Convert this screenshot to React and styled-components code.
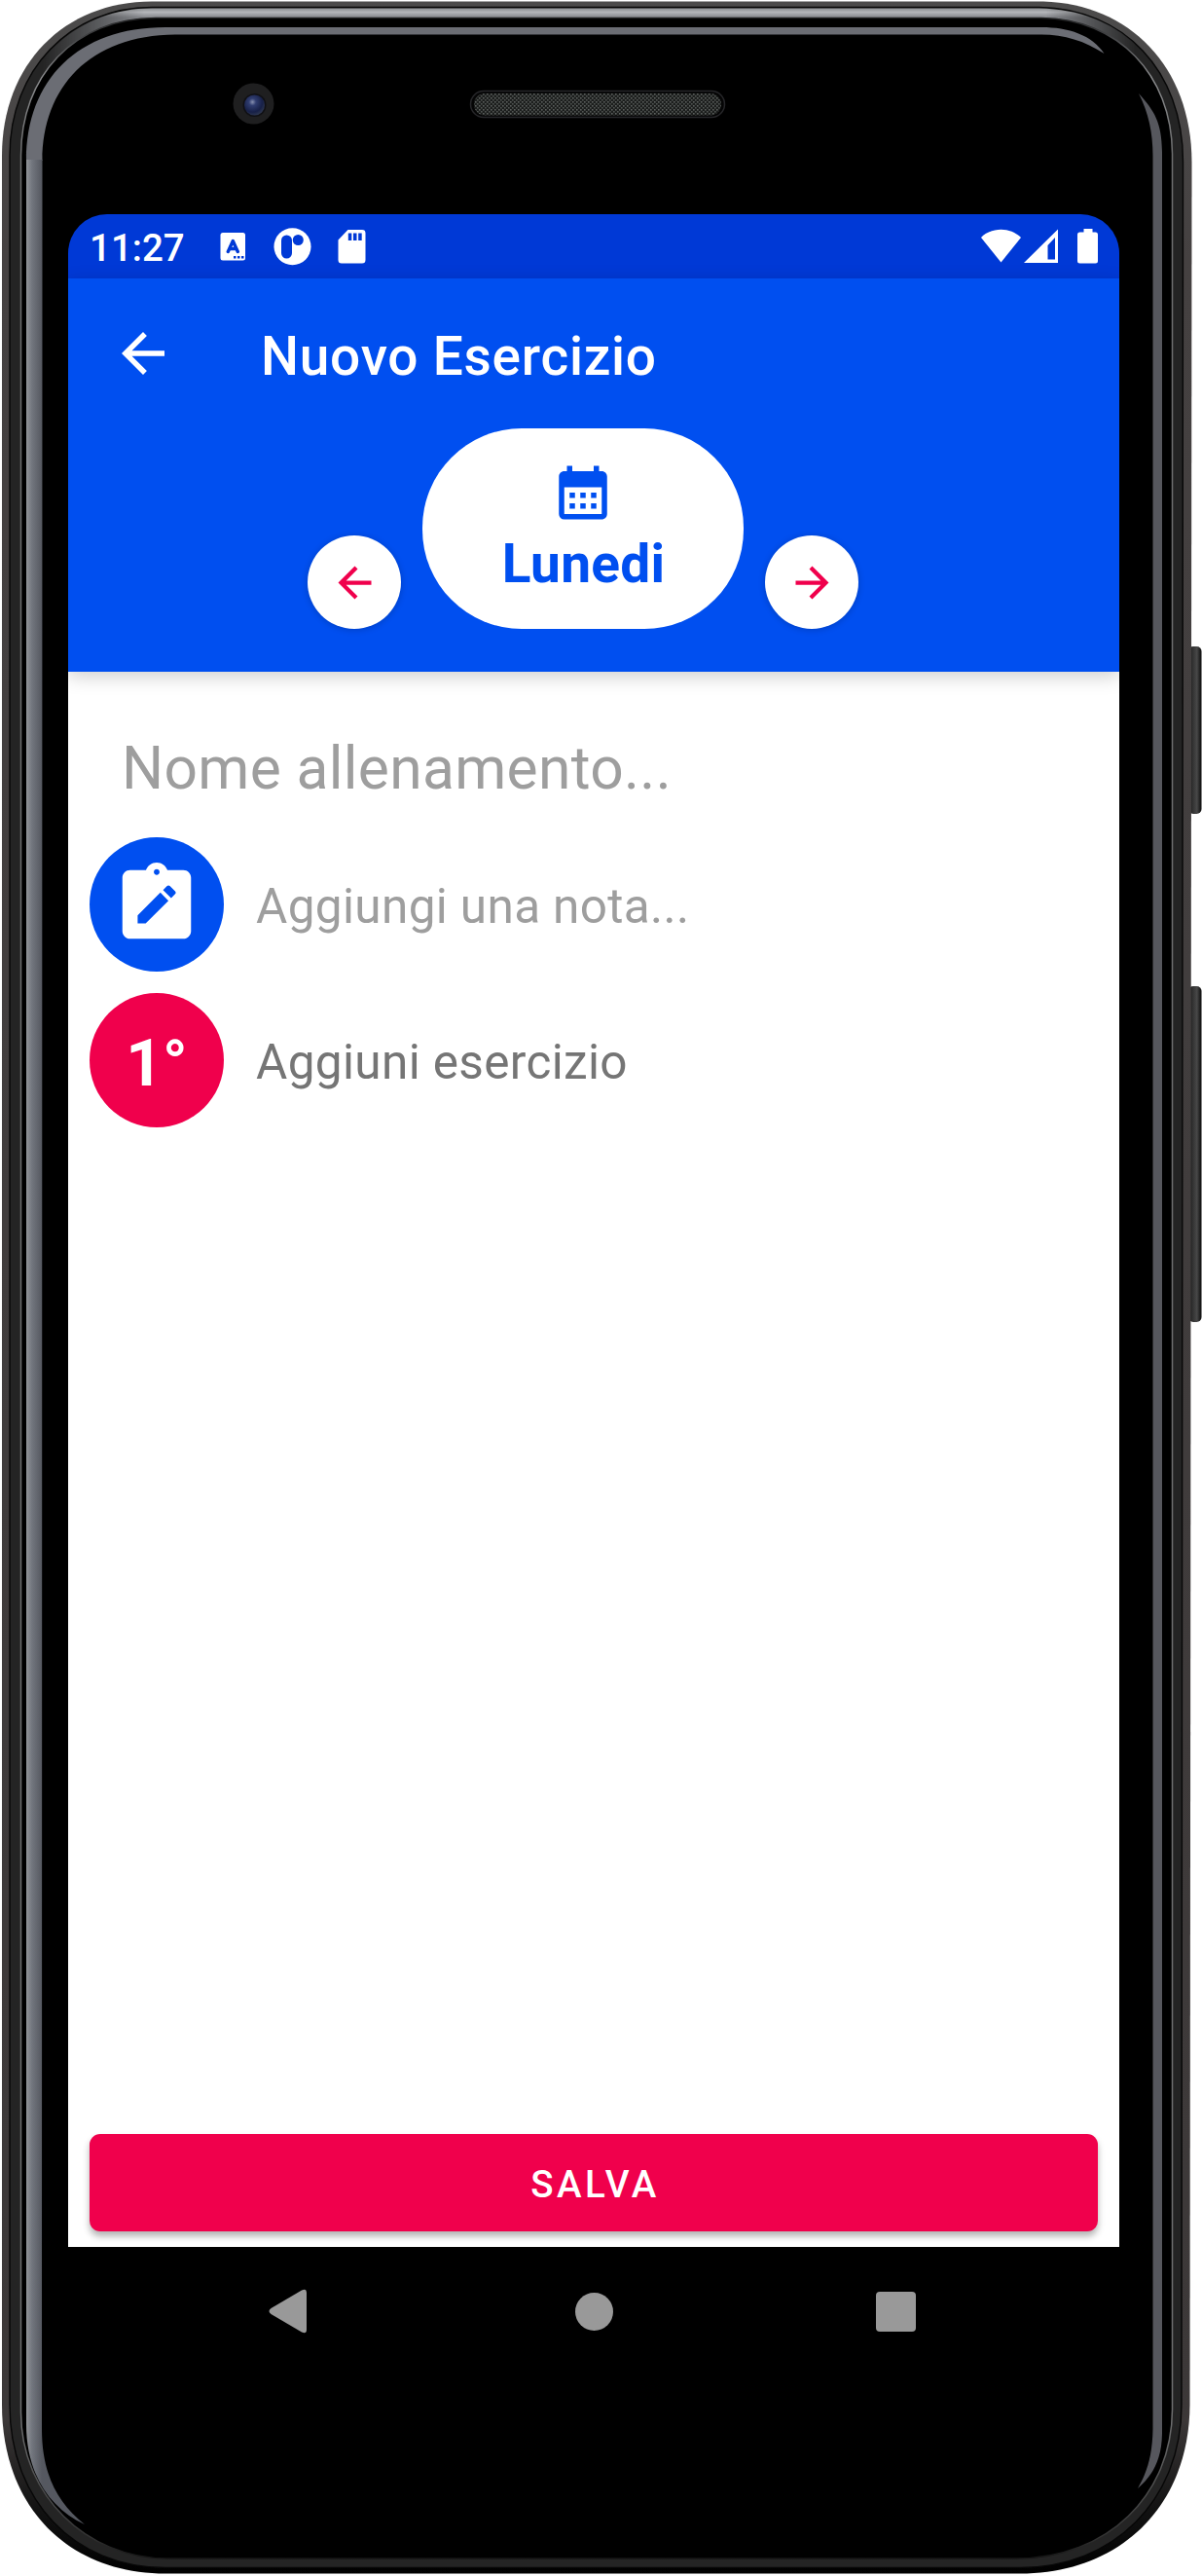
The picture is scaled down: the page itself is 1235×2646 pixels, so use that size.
import React from "react";
import styled, { createGlobalStyle, css } from "styled-components";

const BLUE = "#004ff0";
const BLUE_DARK = "#0039d6";
const PINK = "#f0004c";

const GlobalStyle = createGlobalStyle`
  html, body { margin: 0; padding: 0; background: #fff; }
  body { font-family: Roboto, "Liberation Sans", sans-serif; overflow: hidden; }
  *, *::before, *::after { box-sizing: border-box; }
`;

const Stage = styled.main`
  position: relative;
  width: 1235px;
  height: 2646px;
  padding: 220px 85px 0 70px;
  overflow: hidden;
`;

const DeviceArt = styled.svg`
  position: absolute;
  inset: 0;
  width: 1235px;
  height: 2646px;
`;

const Screen = styled.div`
  position: relative;
  display: flex;
  flex-direction: column;
  width: 1080px;
  height: 2220px;
  border-radius: 40px 40px 0 0;
  overflow: hidden;
  background: #000;
`;

const StatusBar = styled.div`
  display: flex;
  justify-content: space-between;
  flex: none;
  height: 66px;
  padding: 0 22px;
  background: ${BLUE_DARK};
`;

const StatusGroup = styled.div`
  display: flex;
  align-items: center;
`;

const Clock = styled.span`
  width: 104px;
  padding-top: 4px;
  font-size: 38.5px;
  font-weight: 500;
  line-height: 46px;
  color: #fff;
`;

const Glyph = styled.svg`
  display: block;
  flex: none;
  width: ${(p) => p.$w}px;
  height: ${(p) => p.$h || p.$w}px;
  fill: ${(p) => p.$color || "#fff"};
`;

const Header = styled.header`
  position: relative;
  z-index: 1;
  flex: none;
  height: 404px;
  background: ${BLUE};
  box-shadow: 0 5px 18px rgba(0, 0, 0, 0.19);
`;

const Toolbar = styled.div`
  display: flex;
  align-items: center;
  height: 154px;
  padding-left: 44px;
`;

const IconButton = styled.button`
  display: flex;
  padding: 0;
  border: 0;
  background: none;
`;

const Title = styled.h1`
  margin: 0 0 0 88px;
  padding-top: 6px;
  font-size: 55px;
  font-weight: 500;
  letter-spacing: 0.75px;
  line-height: 66px;
  color: #fff;
  white-space: nowrap;
`;

const DayPicker = styled.div`
  display: flex;
  align-items: flex-end;
  gap: 22px;
  padding-left: 246px;
`;

const DayButton = styled.button`
  display: flex;
  align-items: center;
  justify-content: center;
  width: 96px;
  height: 96px;
  padding: 0;
  border: 0;
  border-radius: 50%;
  background: #fff;
  box-shadow: 0 1px 7px rgba(0, 0, 0, 0.2);
`;

const DayPill = styled.div`
  display: flex;
  flex-direction: column;
  align-items: center;
  width: 330px;
  height: 206px;
  padding-top: 33px;
  border-radius: 102px;
  background: #fff;
`;

const DayName = styled.span`
  margin-top: 8px;
  padding-left: 1px;
  font-size: 55px;
  font-weight: 700;
  letter-spacing: 0.25px;
  line-height: 65px;
  color: ${BLUE};
`;

const Content = styled.section`
  display: flex;
  flex-direction: column;
  flex: none;
  height: 1618px;
  padding: 0 22px 16px;
  background: #fff;
`;

const NameField = styled.div`
  display: flex;
  align-items: center;
  height: 170px;
  padding: 29px 0 0 33px;
  font-size: 60.5px;
  letter-spacing: 0.33px;
  line-height: 72px;
  color: #9e9e9e;
`;

const Row = styled.div`
  display: flex;
  align-items: center;
  gap: 33px;
  height: 138px;
  margin-bottom: 22px;
`;

const Badge = styled.div`
  display: flex;
  align-items: center;
  justify-content: center;
  width: 138px;
  height: 138px;
  border-radius: 50%;
  background: ${(p) => p.$bg};
  ${(p) =>
    p.$text &&
    css`
      padding-top: 7px;
      font-size: 66px;
      font-weight: 700;
      line-height: 78px;
      color: #fff;
    `}
`;

const RowText = styled.span`
  padding-top: 4px;
  font-size: 49.5px;
  letter-spacing: 0.35px;
  line-height: 58px;
  color: ${(p) => p.$color};
`;

const SaveButton = styled.button`
  display: flex;
  align-items: center;
  justify-content: center;
  height: 100px;
  margin-top: auto;
  padding: 4px 0 0 3px;
  border: 0;
  border-radius: 11px;
  background: ${PINK};
  box-shadow: 0 5px 7px rgba(0, 0, 0, 0.3);
  font-family: inherit;
  font-size: 38.5px;
  font-weight: 500;
  letter-spacing: 3.44px;
  line-height: 46px;
  color: #fff;
`;

const NavBar = styled.nav`
  display: flex;
  align-items: center;
  flex: none;
  height: 132px;
  padding-left: 206px;
`;

const NavGlyph = styled(Glyph)`
  margin-right: ${(p) => p.$after || 0}px;
`;

function PhoneArt() {
  return (
    <DeviceArt viewBox="0 0 1235 2646" aria-hidden="true">
      <defs>
        <linearGradient id="shell" x1="0" y1="0" x2="0" y2="1">
          <stop offset="0" stopColor="#4c4b4b" />
          <stop offset=".1" stopColor="#454141" />
          <stop offset=".94" stopColor="#3c3838" />
          <stop offset=".975" stopColor="#121212" />
          <stop offset="1" stopColor="#000" />
        </linearGradient>
        <linearGradient id="topGloss" x1="0" y1="8" x2="0" y2="18" gradientUnits="userSpaceOnUse">
          <stop offset="0" stopColor="#86898c" />
          <stop offset=".45" stopColor="#b4b6ba" />
          <stop offset="1" stopColor="#85878c" />
        </linearGradient>
        <linearGradient id="glossFade" x1="0" y1="0" x2="1235" y2="0" gradientUnits="userSpaceOnUse">
          <stop offset=".035" stopColor="#fff" stopOpacity="0" />
          <stop offset=".12" stopColor="#fff" />
          <stop offset=".87" stopColor="#fff" />
          <stop offset=".945" stopColor="#fff" stopOpacity="0" />
        </linearGradient>
        <mask id="glossMask" maskUnits="userSpaceOnUse" x="0" y="0" width="1235" height="170">
          <rect width="1235" height="170" fill="url(#glossFade)" />
        </mask>
        <linearGradient id="rim" x1="0" y1="0" x2="0" y2="2646" gradientUnits="userSpaceOnUse">
          <stop offset="0" stopColor="#000" />
          <stop offset=".012" stopColor="#3a3b3d" />
          <stop offset=".03" stopColor="#8a8b8d" />
          <stop offset=".06" stopColor="#6e6f70" />
          <stop offset=".94" stopColor="#6e6f70" />
          <stop offset=".985" stopColor="#333" />
          <stop offset=".994" stopColor="#111" />
        </linearGradient>
        <linearGradient id="leftGloss" x1="27" y1="0" x2="43" y2="0" gradientUnits="userSpaceOnUse">
          <stop offset="0" stopColor="#94969a" />
          <stop offset=".35" stopColor="#73777f" />
          <stop offset="1" stopColor="#555860" />
        </linearGradient>
        <linearGradient id="key" x1="0" y1="0" x2="1" y2="0">
          <stop offset="0" stopColor="#111" />
          <stop offset=".3" stopColor="#303030" />
          <stop offset=".65" stopColor="#484848" />
          <stop offset="1" stopColor="#090909" />
        </linearGradient>
        <radialGradient id="lens" cx=".4" cy=".35" r=".7">
          <stop offset="0" stopColor="#8790b0" />
          <stop offset=".25" stopColor="#303d70" />
          <stop offset=".7" stopColor="#172047" />
          <stop offset="1" stopColor="#313a50" />
        </radialGradient>
        <pattern id="mesh" width="4" height="4" patternUnits="userSpaceOnUse">
          <rect width="4" height="4" fill="#1c1e1d" />
          <rect width="1.6" height="1.6" fill="#5c605e" />
          <rect x="2" y="2" width="1.6" height="1.6" fill="#505452" />
        </pattern>
      </defs>

      <rect x="1221" y="664" width="13.5" height="172" rx="5" fill="url(#key)" />
      <rect x="1221" y="1013" width="13.5" height="345" rx="5" fill="url(#key)" />

      <path
        fill="url(#shell)"
        d="M156 1.5H1072C1160 4 1224 68 1224.5 166L1222.5 2470C1222 2575 1150 2643.5 1048 2643.5H170C70 2643.5 2 2575 2 2470V160C2 66 66 1.5 156 1.5Z"
      />
      <path
        fill="#242424"
        stroke="#070707"
        strokeWidth="1.4"
        d="M156 7.5H1068C1154 9 1215.5 72 1215.5 166L1214 2470C1214 2568 1144 2637.5 1048 2637.5H170C76 2637.5 10 2568 10 2470V160C10 72 72 7.5 156 7.5Z"
      />
      <path
        fill="url(#topGloss)"
        mask="url(#glossMask)"
        d="M156 8.5H1068C1150 10 1200 64 1210 125H16C26 62 80 8.5 156 8.5Z"
      />
      <path
        fill="#000"
        stroke="url(#rim)"
        strokeWidth="1.5"
        d="M160 18.5H1070C1148 19 1204 76 1204.5 158V2475C1204 2563 1138 2628 1044 2628H172C88 2628 21.5 2562 21.5 2478V160C21.5 78 76 18.5 160 18.5Z"
      />
      <path
        fill="#6b6d74"
        d="M170 28H1070C1098 28 1122 36 1134.5 55C1114 42 1094 35.5 1070 35.5H180C92 36 43.5 90 43.5 165H27C27 82 80 28 170 28Z"
      />
      <path
        fill="url(#leftGloss)"
        d="M27 164H43.5L43 2495C43 2540 58 2570 87 2593C50 2576 27 2540 27 2490Z"
      />
      <path
        fill="#56575d"
        d="M1170 96C1186 114 1193.5 125 1194 156V2500C1193.5 2527 1184 2543 1169 2556C1178 2540 1184 2524 1184.5 2495V160C1184.5 136 1180 116 1170 96Z"
      />

      <rect x="483.5" y="93.5" width="261" height="27" rx="13.5" fill="#050505" stroke="#262629" strokeWidth="1.5" />
      <rect x="487" y="96" width="254" height="22.5" rx="11.2" fill="url(#mesh)" />
      <circle cx="260.5" cy="106.5" r="21" fill="#1f1f20" />
      <circle cx="261.5" cy="108" r="12" fill="#101014" />
      <circle cx="261.5" cy="108" r="10.5" fill="url(#lens)" />
    </DeviceArt>
  );
}

const ARROW_BACK = "M20 11H7.83l5.59-5.59L12 4l-8 8 8 8 1.41-1.41L7.83 13H20v-2z";
const ARROW_FORWARD = "M12 4l-1.41 1.41L16.17 11H4v2h12.17l-5.58 5.59L12 20l8-8z";

export default function App() {
  return (
    <>
      <GlobalStyle />
      <Stage>
        <PhoneArt />
        <Screen>
          <StatusBar>
            <StatusGroup>
              <Clock>11:27</Clock>
              <Glyph $w={190} $h={66} viewBox="0 0 190 66">
                <rect x="30.5" y="19" width="25.5" height="28.5" rx="2.5" />
                <path d="M38.3 38.5L43.3 27.5L48.300 38.500M40 35.500H46.600" fill="none" stroke={BLUE_DARK} strokeWidth="3.4" strokeLinecap="round" strokeLinejoin="round" />
                <path d="M44 43h2.5v2.5H44zM48 43h2.5v2.5H48zM52 43h2.5v2.5H52z" fill={BLUE_DARK} />
                <circle cx="104.5" cy="33.3" r="19" />
                <rect x="93" y="21.5" width="11" height="24" rx="5.5" fill={BLUE_DARK} />
                <circle cx="110.3" cy="26.5" r="5.5" fill={BLUE_DARK} />
                <path fillRule="evenodd" d="M161.5 16H176a3.500 3.500 0 0 1 3.500 3.500V47a3.500 3.500 0 0 1-3.500 3.500H155a3.500 3.500 0 0 1-3.500-3.500V26.500ZM161.800 19.500V27h3.500v-7.500ZM167 19.500V27h3.500v-7.500ZM172.200 19.500V27h3.500v-7.500Z" />
              </Glyph>
            </StatusGroup>
            <StatusGroup>
              <Glyph $w={120} $h={66} viewBox="0 0 120 66">
                <path d="M0 24C11 13 30 13 41 24L20.5 49.5Z" />
                <path fillRule="evenodd" d="M79 15.5V50H44ZM76 24L68.5 32V46.5H76Z" />
                <path d="M105.5 15h9v3.500h3a2.500 2.500 0 0 1 2.500 2.500V48a2.500 2.500 0 0 1-2.500 2.500H101.500a2.500 2.500 0 0 1-2.500-2.500V21a2.500 2.500 0 0 1 2.500-2.500h4Z" />
              </Glyph>
            </StatusGroup>
          </StatusBar>

          <Header>
            <Toolbar>
              <IconButton aria-label="Indietro">
                <Glyph $w={66} viewBox="0 0 24 24">
                  <path d={ARROW_BACK} />
                </Glyph>
              </IconButton>
              <Title>Nuovo Esercizio</Title>
            </Toolbar>
            <DayPicker>
              <DayButton aria-label="Giorno precedente">
                <Glyph $w={51} $color={PINK} viewBox="0 0 24 24">
                  <path d={ARROW_BACK} />
                </Glyph>
              </DayButton>
              <DayPill>
                <Glyph $w={66} $color={BLUE} viewBox="0 0 24 24">
                  <path d="M19 4h-1V2h-2v2H8V2H6v2H5c-1.11 0-1.99.9-1.99 2L3 20a2 2 0 0 0 2 2h14c1.1 0 2-.9 2-2V6c0-1.1-.9-2-2-2zm0 16H5V10h14v10zM9 14H7v-2h2v2zm4 0h-2v-2h2v2zm4 0h-2v-2h2v2zm-8 4H7v-2h2v2zm4 0h-2v-2h2v2zm4 0h-2v-2h2v2z" />
                </Glyph>
                <DayName>Lunedi</DayName>
              </DayPill>
              <DayButton aria-label="Giorno successivo">
                <Glyph $w={51} $color={PINK} viewBox="0 0 24 24">
                  <path d={ARROW_FORWARD} />
                </Glyph>
              </DayButton>
            </DayPicker>
          </Header>

          <Content>
            <NameField>Nome allenamento...</NameField>
            <Row>
              <Badge $bg={BLUE}>
                <Glyph $w={94} viewBox="0 0 24 24">
                  <path
                    fillRule="evenodd"
                    d="M19 3h-4.18C14.4 1.84 13.3 1 12 1s-2.4.84-2.82 2H5c-1.1 0-2 .9-2 2v14c0 1.100.9 2 2 2h14c1.1 0 2-.9 2-2V5c0-1.100-.9-2-2-2zM12 2.750c.41 0 .75.34.75.75s-.34.75-.75.75-.75-.34-.75-.75.34-.75.75-.75zM9.100 17H7v-2.140l5.960-5.960 2.120 2.120L9.100 17zm7.750-7.730l-1.060 1.060-2.120-2.120 1.060-1.060c.2-.2.51-.2.71 0l1.410 1.410c.2.2.2.51 0 .71z"
                  />
                </Glyph>
              </Badge>
              <RowText $color="#9e9e9e">Aggiungi una nota...</RowText>
            </Row>
            <Row>
              <Badge $bg={PINK} $text>
                1°
              </Badge>
              <RowText $color="#757575">Aggiuni esercizio</RowText>
            </Row>
            <SaveButton>SALVA</SaveButton>
          </Content>

          <NavBar>
            <NavGlyph $w={40} $h={46} $after={275} $color="#999" viewBox="0 0 40 46">
              <path d="M34 1.5Q38.8-1 39 4V42Q38.8 47 34 44.5L2.5 26Q-1.5 23 2.5 20Z" />
            </NavGlyph>
            <NavGlyph $w={39} $after={270} $color="#999" viewBox="0 0 39 39">
              <circle cx="19.5" cy="19.5" r="19.5" />
            </NavGlyph>
            <NavGlyph $w={41} $color="#999" viewBox="0 0 41 41">
              <rect width="41" height="41" rx="4" />
            </NavGlyph>
          </NavBar>
        </Screen>
      </Stage>
    </>
  );
}
